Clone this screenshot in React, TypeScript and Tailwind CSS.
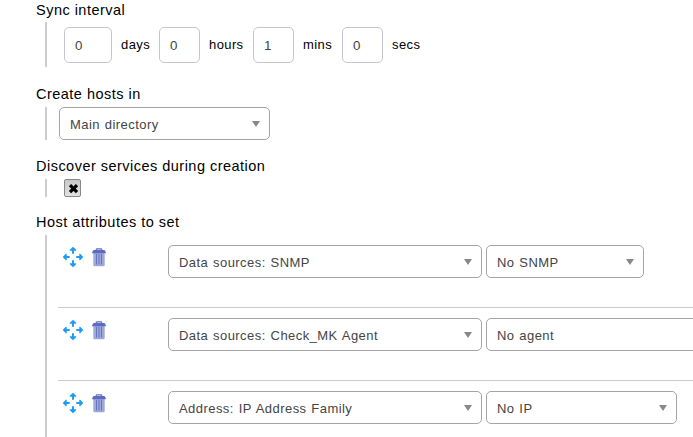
import React from "react";

function Heading({ children }: { children: React.ReactNode }) {
  return <h2 className="h-5 whitespace-pre text-[14.5px] leading-5 tracking-[0.48px] text-black">{children}</h2>;
}

function NumberBox({ value, className }: { value: string; className: string }) {
  return (
    <div className={`flex h-[36px] shrink-0 items-center rounded-[5px] border border-[#c6c6d2] pl-[10px] pt-[2px] text-[13.33px] text-[#444] ${className}`}>
      {value}
    </div>
  );
}

function Unit({ children, className }: { children: React.ReactNode; className: string }) {
  return <span className={`shrink-0 text-[13px] tracking-[0.4px] text-black ${className}`}>{children}</span>;
}

function Select({ label, className }: { label: string; className: string }) {
  return (
    <div className={`flex h-[33px] shrink-0 items-center justify-between rounded-[5px] border border-[#a5a5a5] pl-[10px] pr-[9px] text-[13px] tracking-[0.44px] [word-spacing:0.8px] text-[#444] ${className}`}>
      <span className="whitespace-pre pt-[2px]">{label}</span>
      <svg width="8" height="6" viewBox="0 0 8 6">
        <path d="M0 0h8L4 6z" fill="#888" />
      </svg>
    </div>
  );
}

function MoveIcon() {
  return (
    <svg width="22" height="22" viewBox="0 0 22 22" fill="#1c9cf2" className="shrink-0">
      {[0, 90, 180, 270].map((angle) => (
        <path key={angle} d="M11 0.7L14.2 3.8V4.7H12V7.7H10V4.7H7.8V3.8Z" transform={`rotate(${angle} 11 11)`} />
      ))}
    </svg>
  );
}

function TrashIcon() {
  return (
    <svg width="14" height="19" viewBox="0 0 14 19" className="shrink-0">
      <path d="M1.3 4.5h11.4V17q0 1.2-1.2 1.2h-9Q1.3 18.2 1.3 17z" fill="#9fa8da" />
      <path d="M4.5 6v10.5M7 6v10.5M9.5 6v10.5" stroke="#6774c2" strokeWidth="1" />
      <path d="M4.2 2.4V1.6Q4.2.9 5 .9h4q.8 0 .8.7v.8" fill="none" stroke="#5c6bc0" strokeWidth="1.1" />
      <path d="M2 2.1h10q1.2 0 1.7 2.1v1H.3v-1Q.8 2.1 2 2.1z" fill="#5c6bc0" />
    </svg>
  );
}

const rows = [
  { attribute: "Data sources: SNMP", value: "No SNMP", width: "w-[158px]" },
  { attribute: "Data sources: Check_MK Agent", value: "No agent", width: "w-[240px]" },
  { attribute: "Address: IP Address Family", value: "No IP", width: "w-[191px]" },
];

export default function App() {
  return (
    <main className="h-[437px] w-[693px] overflow-hidden bg-white pl-[36px] font-['Liberation_Sans',Arial,sans-serif]">
      <section>
        <Heading>Sync interval</Heading>
        <div className="ml-[9px] mt-[2px] flex h-[45px] items-center border-l-2 border-[#ccc] pl-[17px]">
          <NumberBox value="0" className="w-[48px]" />
          <Unit className="ml-[9px] w-[38px]">days</Unit>
          <NumberBox value="0" className="w-[41px]" />
          <Unit className="ml-[9px] w-[44px]">hours</Unit>
          <NumberBox value="1" className="w-[41px]" />
          <Unit className="ml-[9px] w-[39px]">mins</Unit>
          <NumberBox value="0" className="w-[41px]" />
          <Unit className="ml-[9px]">secs</Unit>
        </div>
      </section>
      <section className="mt-[17px]">
        <Heading>Create hosts in</Heading>
        <div className="ml-[9px] mt-[3px] border-l-2 border-[#ccc] pl-[12px]">
          <Select label="Main directory" className="w-[211px]" />
        </div>
      </section>
      <section className="mt-[16px]">
        <Heading>Discover services during creation</Heading>
        <div className="ml-[9px] mt-[3px] flex h-[18px] border-l-2 border-[#ccc] pl-[17px]">
          <div className="flex h-[18px] w-[17px] items-center justify-center rounded-[2px] border border-[#888] bg-gradient-to-b from-[#c8c8c8] to-[#e2e2e2] pl-px pt-px">
            <svg width="11" height="10" viewBox="0 0 11 10">
              <path d="M2 1.2l7 7M9 1.2l-7 7" stroke="#000" strokeWidth="3.2" />
            </svg>
          </div>
        </div>
      </section>
      <section className="mt-[15px]">
        <Heading>Host attributes to set</Heading>
        <div className="ml-[9px] mt-[3px] border-l-2 border-[#ccc] pl-[11px]">
          {rows.map((row) => (
            <div key={row.attribute} className="flex h-[73px] items-start border-b border-[#ccc] pl-[4px] pt-[10px]">
              <div className="mt-px"><MoveIcon /></div>
              <div className="ml-[8px] mt-[3px]"><TrashIcon /></div>
              <div className="ml-[62px] flex gap-[4px]">
                <Select label={row.attribute} className="w-[314px]" />
                <Select label={row.value} className={row.width} />
              </div>
            </div>
          ))}
        </div>
      </section>
    </main>
  );
}
